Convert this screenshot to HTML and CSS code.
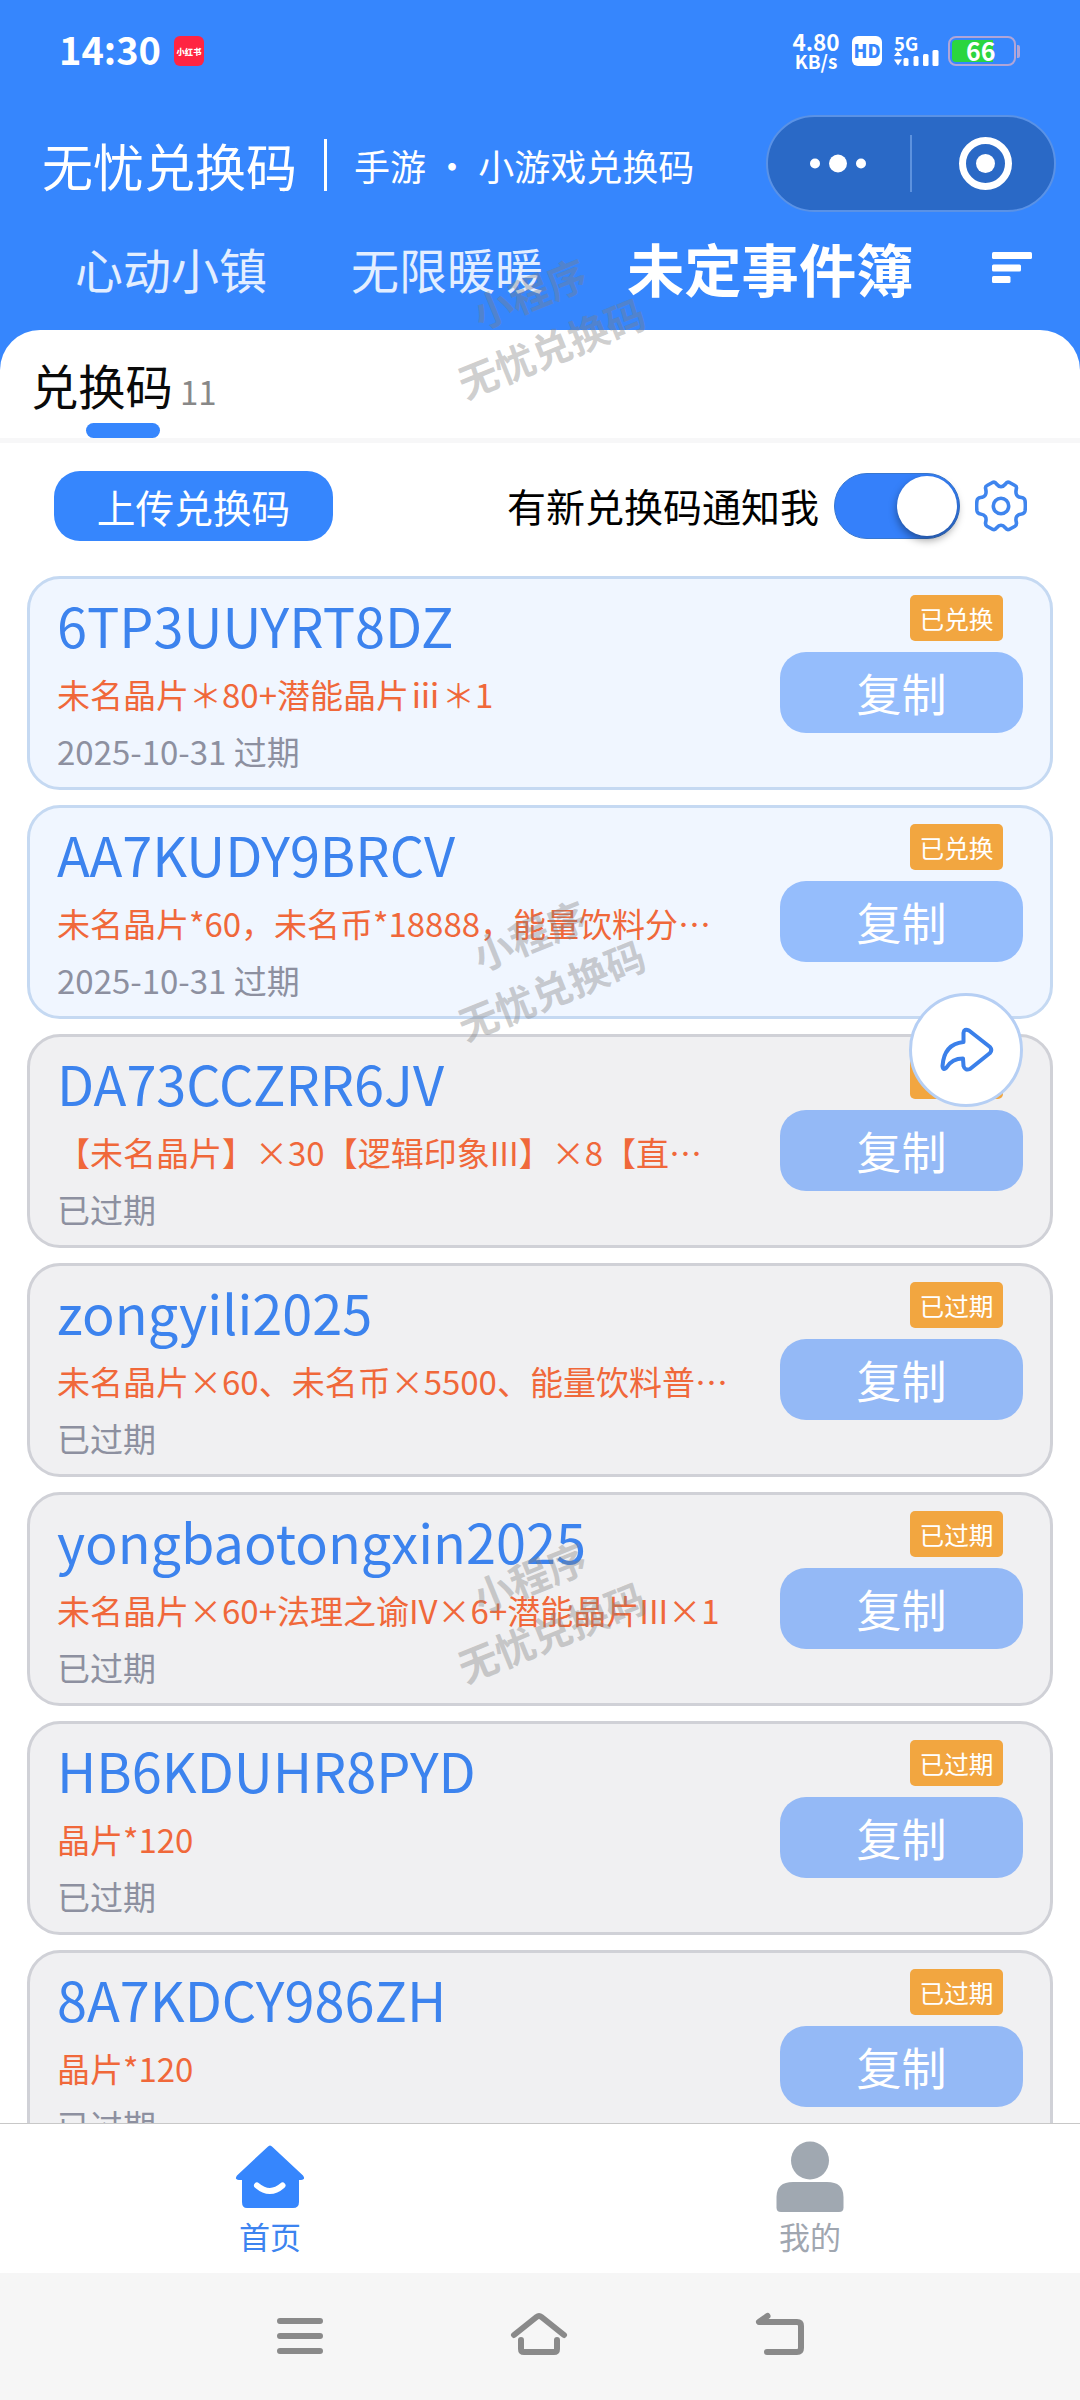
FILE: index.html
```html
<!DOCTYPE html>
<html lang="zh-CN">
<head>
<meta charset="utf-8">
<title>无忧兑换码</title>
<link rel="stylesheet" href="styles.css">
</head>
<body>
<div class="screen">
  <header class="header">
    <div class="status">
      <span class="time">14:30</span>
      <span class="app-badge">小红书</span>
      <span class="speed"><b class="speed-num">4.80</b><b class="speed-unit">KB/s</b></span>
      <span class="hd">HD</span>
      <span class="signal">
        <b class="net">5G</b>
        <svg width="45" height="16" viewBox="0 0 45 16" fill="#fff"><path d="M0 6l4-5 4 5zM0 9.500h8l-4 6z"/><rect x="9.500" y="8" width="5" height="8" rx="1.500"/><rect x="19.500" y="6" width="5" height="10" rx="1.500"/><rect x="29" y="4" width="5.500" height="12" rx="1.500"/><rect x="38.500" y="0" width="6" height="16" rx="1.500"/></svg>
      </span>
      <span class="battery"><span class="charge">66</span></span><i class="nub"></i>
    </div>
    <div class="title-row">
      <h1 class="title">无忧兑换码</h1>
      <i class="title-line"></i>
      <span class="subtitle">手游 · 小游戏兑换码</span>
      <div class="capsule">
        <svg width="286" height="92" viewBox="0 0 286 92"><g fill="#fff"><circle cx="47" cy="46.500" r="5"/><circle cx="70" cy="46.500" r="9"/><circle cx="93" cy="46.500" r="5"/><circle cx="217.500" cy="46.500" r="9.500"/></g><circle cx="217.500" cy="46.500" r="23" fill="none" stroke="#fff" stroke-width="7"/><path d="M143 18v57" stroke="#5d92de" stroke-width="2"/></svg>
      </div>
    </div>
    <nav class="games">
      <span class="game">心动小镇</span>
      <span class="game">无限暖暖</span>
      <span class="game on">未定事件簿</span>
      <svg class="sort" width="40" height="31" viewBox="0 0 40 31" fill="#fff"><rect width="40" height="7" rx="1.500"/><rect y="12.500" width="29" height="7" rx="1.500"/><rect y="24" width="18.500" height="7" rx="1.500"/></svg>
    </nav>
  </header>

  <main class="panel">
    <div class="head">
      <span class="head-name">兑换码</span><span class="head-count">11</span>
    </div>
    <div class="tools">
      <button class="upload">上传兑换码</button>
      <span class="notify">有新兑换码通知我</span>
      <span class="switch"><i class="knob"></i></span>
      <svg class="gear" width="52" height="52" viewBox="-26 -26 52 52" fill="none" stroke="#3f85ee" stroke-width="3.600" stroke-linejoin="round"><circle r="7.700"/><path d="M-8.500 -23.500Q-6 -24.500 -4.500 -22Q0 -16.500 4.500 -22Q6 -24.500 8.500 -23.500L14 -20.500Q16 -19.500 15.300 -17Q13.500 -9 20.500 -8.500Q23.500 -8 24 -5.500Q24.800 0 24 5Q23.500 7.500 20.500 8Q13.500 9 15.300 16Q16 19 14 20.200L8.500 23.300Q6 24.300 4.500 22Q0 16.500 -4.500 22Q-6 24.300 -8.500 23.300L-14 20.200Q-16 19 -15.300 16Q-13.500 9 -20.500 8Q-23.500 7.500 -24 5Q-24.800 0 -24 -5.500Q-23.500 -8 -20.500 -8.500Q-13.500 -9 -15.300 -17Q-16 -19.500 -14 -20.500Z"/></svg>
    </div>
    <div class="list">
      <article class="card fresh"><div class="info"><p class="code">6TP3UUYRT8DZ</p><p class="desc">未名晶片＊80+潜能晶片ⅲ＊1</p><p class="date">2025-10-31 过期</p></div><div class="side"><span class="tag">已兑换</span><button class="copy">复制</button></div></article>
      <article class="card fresh"><div class="info"><p class="code">AA7KUDY9BRCV</p><p class="desc">未名晶片*60，未名币*18888，能量饮料分…</p><p class="date">2025-10-31 过期</p></div><div class="side"><span class="tag">已兑换</span><button class="copy">复制</button></div></article>
      <article class="card"><div class="info"><p class="code">DA73CCZRR6JV</p><p class="desc">【未名晶片】×30【逻辑印象III】×8【直…</p><p class="date">已过期</p></div><div class="side"><span class="tag"></span><button class="copy">复制</button></div></article>
      <article class="card"><div class="info"><p class="code">zongyili2025</p><p class="desc">未名晶片×60、未名币×5500、能量饮料普…</p><p class="date">已过期</p></div><div class="side"><span class="tag">已过期</span><button class="copy">复制</button></div></article>
      <article class="card"><div class="info"><p class="code">yongbaotongxin2025</p><p class="desc">未名晶片×60+法理之谕IV×6+潜能晶片III×1</p><p class="date">已过期</p></div><div class="side"><span class="tag">已过期</span><button class="copy">复制</button></div></article>
      <article class="card"><div class="info"><p class="code">HB6KDUHR8PYD</p><p class="desc">晶片*120</p><p class="date">已过期</p></div><div class="side"><span class="tag">已过期</span><button class="copy">复制</button></div></article>
      <article class="card"><div class="info"><p class="code">8A7KDCY986ZH</p><p class="desc">晶片*120</p><p class="date">已过期</p></div><div class="side"><span class="tag">已过期</span><button class="copy">复制</button></div></article>
    </div>
  </main>

  <footer class="tabbar">
    <div class="tab active">
      <svg width="70" height="69" viewBox="0 0 70 69"><path d="M32.500 3Q35 0 37.500 3L68 31.500Q71 35.500 66 36H64V58Q64 64 58 64H12Q7 64 7 58V36H4Q-1 35.500 2 31.500Z" fill="#3686fd"/><path d="M22 41.500Q35 52.500 47.500 41.500" fill="none" stroke="#fff" stroke-width="6" stroke-linecap="round"/></svg>
      <span>首页</span>
    </div>
    <div class="tab">
      <svg width="70" height="74" viewBox="0 0 70 74" fill="#a0a8b1"><circle cx="35" cy="21.500" r="19"/><path d="M1.500 58Q1.500 43 18 43H52Q68.500 43 68.500 58V68.500Q68.500 73 64 73H6Q1.500 73 1.500 68.500Z"/></svg>
      <span>我的</span>
    </div>
  </footer>
  <div class="sysnav">
    <svg width="50" height="44" viewBox="0 0 50 44"><path d="M5 8h40M5 23h40M5 38h40"/></svg>
    <svg width="60" height="50" viewBox="0 0 60 50"><path d="M5 25L27.500 7Q30 5 32.500 7L55 25M12 30V39Q12 42 15 42H45Q48 42 48 39V30"/></svg>
    <svg width="56" height="50" viewBox="0 0 56 50"><path d="M15.500 6L7 12H45Q49 12 49 16V38Q49 42 45 42H15"/></svg>
  </div>

  <div class="marks"><p class="mark">小程序<br>无忧兑换码</p><p class="mark">小程序<br>无忧兑换码</p><p class="mark">小程序<br>无忧兑换码</p></div>
  <div class="share">
    <svg width="56" height="48" viewBox="0 0 56 48" fill="none" stroke="#3b80ea" stroke-width="4" stroke-linejoin="round"><path d="M25.500 7Q26 2 31 4.500L52 21Q54.500 24 52 27L32 43Q27 45 25.500 40L25 32.500Q14 32.500 8.500 41.500Q5 45 4.500 40Q6 18 25.500 16Z"/></svg>
  </div>
</div>
</body>
</html>
```
FILE: styles.css
```css
* { box-sizing: border-box; margin: 0; padding: 0; }

body {
  width: 1080px;
  height: 2400px;
  overflow: hidden;
  font-family: "Noto Sans CJK SC", "Noto Sans", sans-serif;
  background: #fff;
  text-spacing-trim: space-all;
}

button { border: 0; font-family: inherit; color: #fff; }
svg { display: block; flex: none; }

.screen {
  position: relative;
  height: 2400px;
  display: flex;
  flex-direction: column;
  background: #3686fd;
  white-space: nowrap;
}

/* header */
.header { height: 330px; color: #fff; }

.status {
  height: 100px;
  padding: 2px 60px 0 59px;
  display: flex;
  align-items: center;
}
.time { width: 115px; font-size: 38px; font-weight: 700; line-height: 40px; margin-top: -4px; }
.app-badge {
  width: 30px;
  height: 30px;
  border-radius: 6px;
  background: #ff2442;
  font-size: 8.300px;
  font-weight: 900;
  line-height: 30px;
  text-align: center;
}
.speed {
  margin-left: auto;
  width: 50px;
  display: flex;
  flex-direction: column;
  align-items: center;
}
.speed-num { font-size: 22.500px; line-height: 19px; }
.speed-unit { font-size: 19px; line-height: 19px; }
.hd {
  width: 30px;
  height: 30px;
  margin-left: 11px;
  border-radius: 6px;
  background: #fff;
  color: #3686fd;
  font-size: 18px;
  font-weight: 900;
  line-height: 29px;
  text-align: center;
}
.signal { width: 45px; margin-left: 12px; }
.signal svg { margin-top: -1px; }
.net { display: block; font-size: 18.500px; line-height: 15px; }
.battery {
  width: 68px;
  height: 30px;
  margin-left: 9px;
  padding: 2px;
  border: 2px solid #b0a5d8;
  border-radius: 8px;
}
.charge {
  display: block;
  height: 22px;
  padding-left: 14px;
  border-radius: 4px;
  background: linear-gradient(90deg, #2bd53f 41px, transparent 41px);
  font-size: 25px;
  font-weight: 700;
  line-height: 20px;
}
.nub { width: 3px; height: 13px; margin-left: 1px; border-radius: 0 2px 2px 0; background: #b0a5d8; }

.title-row {
  height: 126px;
  padding: 0 24px 0 42px;
  display: flex;
  align-items: center;
}
.title { width: 282px; padding-top: 3px; font-size: 51px; font-weight: 400; }
.title-line { width: 3px; height: 52px; margin-top: 4px; background: #fff; }
.subtitle { margin-left: 27px; padding-top: 3px; font-size: 36px; }
.capsule {
  margin-left: auto;
  width: 290px;
  height: 97px;
  border: 2px solid #5a92e6;
  border-radius: 49px;
  background: #2a69c6;
}

.games {
  height: 104px;
  padding: 0 48px 24px 75px;
  display: flex;
  align-items: center;
}
.game { width: 276px; font-size: 48px; color: #e3eeff; position: relative; top: 2px; }
.game.on { top: 1px; width: 290px; font-size: 57.300px; font-weight: 700; color: #fff; }
.sort { margin-left: auto; margin-top: 2px; }

/* content panel */
.panel {
  flex: 1;
  min-height: 0;
  overflow: hidden;
  border-radius: 40px 40px 0 0;
  background: #fff;
}
.head {
  position: relative;
  height: 113px;
  padding-left: 31px;
  border-bottom: 5px solid #f7f7f8;
  line-height: 109px;
}
.head::after {
  content: "";
  position: absolute;
  left: 86px;
  bottom: 0;
  width: 74px;
  height: 15px;
  border-radius: 8px;
  background: #3686fd;
}
.head-name { font-size: 47.300px; color: #0a0a0a; }
.head-count { margin-left: 7px; font-size: 33px; color: #888; }

.tools {
  height: 133px;
  padding: 0 53px 7px 54px;
  display: flex;
  align-items: center;
}
.upload {
  width: 279px;
  height: 70px;
  border-radius: 26px;
  background: #3686fd;
  font-size: 38.700px;
  line-height: 68px;
}
.notify { margin: -2px 0 0 auto; font-size: 39px; color: #000; }
.switch {
  width: 126px;
  height: 66px;
  margin: 0 15px;
  padding: 2px 2px;
  display: flex;
  justify-content: flex-end;
  border: 1px solid #3877cf;
  border-radius: 33px;
  background: #3580fa;
}
.knob {
  width: 60px;
  height: 60px;
  border-radius: 50%;
  background: #fff;
  box-shadow: 0 4px 9px rgba(0, 0, 0, .4);
}

.list { display: grid; gap: 15px; padding: 0 27px; }
.card {
  height: 214px;
  padding: 14px 27px 0 27px;
  display: flex;
  justify-content: space-between;
  border: 3px solid #d0d1d7;
  border-radius: 33px;
  background: #f0f0f2;
}
.card.fresh { border-color: #c5d9f2; background: #f0f6ff; }
.code { font-size: 54px; line-height: 64px; color: #3c83ee; }
.desc { font-size: 33px; line-height: 74px; color: #f0683a; }
.date { font-size: 33px; line-height: 40px; color: #8d90a0; }
.side { width: 243px; padding-top: 2px; }
.tag {
  display: block;
  width: 93px;
  height: 46px;
  margin: 0 0 11px 130px;
  border-radius: 5px;
  background: #f2a640;
  color: #fff;
  font-size: 24.700px;
  line-height: 46px;
  text-align: center;
}
.copy {
  display: block;
  width: 243px;
  height: 81px;
  border-radius: 26px;
  background: #94b9f6;
  font-size: 45px;
  line-height: 81px;
}
.fresh .copy { background: #95bdfc; }

/* bottom bars */
.tabbar {
  height: 150px;
  display: grid;
  grid-template-columns: 1fr 1fr;
  border-top: 1px solid #c8c8c8;
  background: #fff;
  color: #a0a6b0;
}
.tab {
  padding-bottom: 15px;
  display: flex;
  flex-direction: column;
  justify-content: flex-end;
  align-items: center;
  font-size: 31px;
  line-height: 44px;
}
.tab svg { margin-bottom: 1px; }
.tab.active { color: #3d84f0; }
.sysnav {
  height: 127px;
  padding: 0 272px 4px 275px;
  display: flex;
  justify-content: space-between;
  align-items: center;
  background: #f6f6f6;
}
.sysnav svg { fill: none; stroke: #8a8a8a; stroke-width: 6; stroke-linecap: round; stroke-linejoin: round; }

/* overlays */
.marks {
  position: absolute;
  top: 261px;
  left: 438px;
  width: 204px;
  display: grid;
  gap: 525px;
}
.mark {
  height: 117px;
  font-size: 39.500px;
  font-weight: 700;
  line-height: 58.500px;
  text-align: center;
  color: rgba(128, 128, 128, .38);
  transform: rotate(-22deg);
}
.share {
  position: absolute;
  top: 993px;
  left: 909px;
  width: 114px;
  height: 114px;
  display: flex;
  align-items: center;
  justify-content: center;
  border: 3px solid #b6cff4;
  border-radius: 50%;
  background: #fff;
}
```
